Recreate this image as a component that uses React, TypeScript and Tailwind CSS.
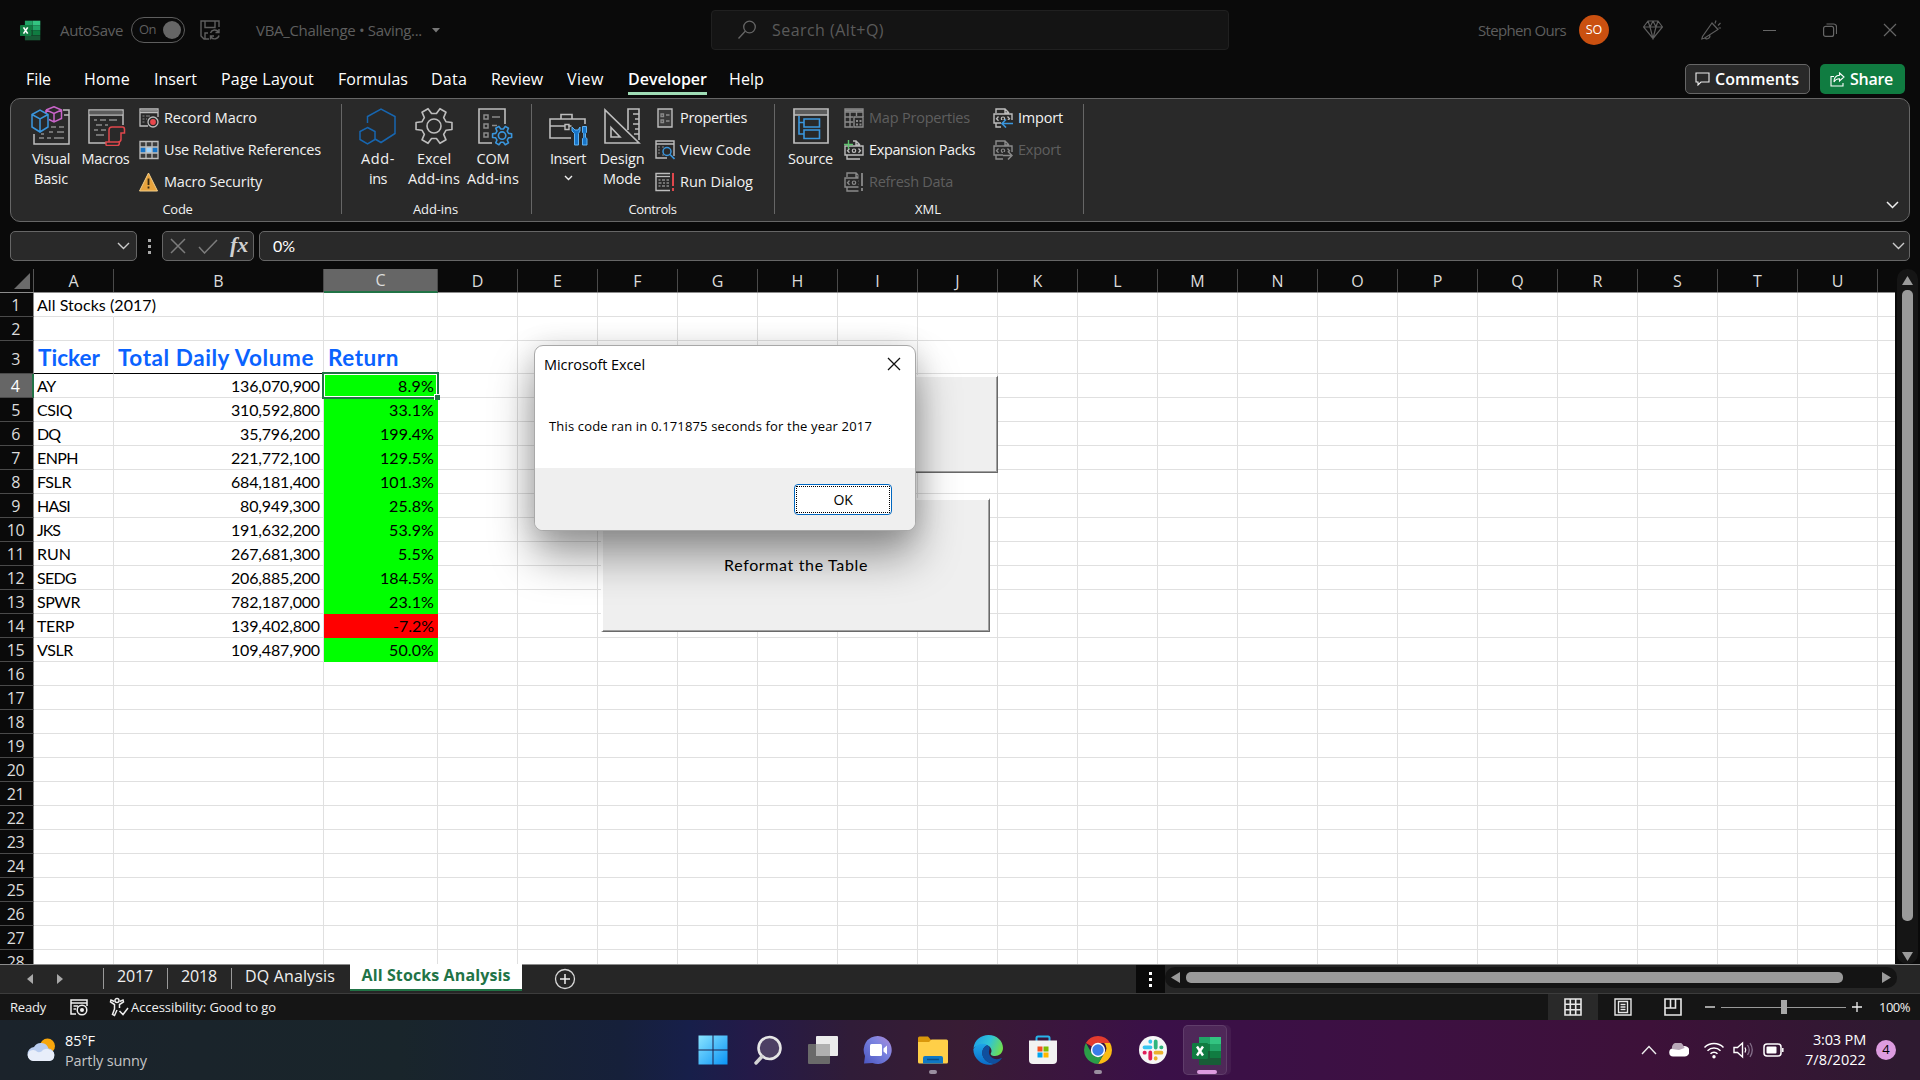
import { useLayoutEffect, useRef, type ReactNode } from 'react';
import clsx from 'clsx';

/** One line of text whose letter spacing is adjusted to fill a given width. */
function Fit({ w, className, children }: { w: number; className?: string; children: string }) {
  const ref = useRef<HTMLSpanElement>(null);
  useLayoutEffect(() => {
    const el = ref.current;
    if (!el) return;
    el.style.letterSpacing = '0px';
    const natural = el.getBoundingClientRect().width;
    el.style.letterSpacing = `${(w - natural) / children.length}px`;
  }, [w, children]);
  return (
    <span ref={ref} className={clsx('inline-block whitespace-nowrap', className)}>
      {children}
    </span>
  );
}

type IconProps = { size?: number; h?: number; box?: string; className?: string; children: ReactNode };
function Svg({ size = 20, h, box, className, children }: IconProps) {
  const hh = h ?? size;
  return (
    <svg width={size} height={hh} viewBox={box ?? `0 0 ${size} ${hh}`} fill="none" className={clsx('shrink-0', className)}>
      {children}
    </svg>
  );
}

const G = '#bdbdbd';
const D = '#8a8a8a';
const B = '#3a96dd';

function ExcelLogo({ size }: { size: number }) {
  return (
    <Svg size={size} box="0 0 30 30">
      <path d="M7 1h11v7H7z" fill="#21a366" />
      <path d="M18 1h11v7H18z" fill="#33c481" />
      <path d="M7 8h11v7H7z" fill="#107c41" />
      <path d="M18 8h11v7H18z" fill="#21a366" />
      <path d="M7 15h11v7H7z" fill="#185c37" />
      <path d="M18 15h11v7H18z" fill="#107c41" />
      <path d="M7 22h22v7H7z" fill="#185c37" />
      <rect x="0" y="7" width="16" height="16" rx="1.3" fill="#107c41" />
      <path d="M5 10.500 11 19.500M11 10.500 5 19.500" stroke="#fff" strokeWidth="2.400" />
    </Svg>
  );
}

/* ---------- large ribbon icons, 40x40 ---------- */
const VisualBasicIcon = () => (
  <Svg size={40}>
    <path d="M32 4h6v34H3V28M33 9h5" stroke={G} strokeWidth="1.500" />
    <path d="M20 21h5M28 21h5M8 32h5M16 32h4M23 32h10M18 26h4M26 26h7M10 28h3" stroke={D} strokeWidth="1.500" />
    <path d="M1 8.500 9 4l8 4.500V21l-8 5-8-5zM1 8.500l8 4.500 8-4.500M9 13v13" stroke={B} strokeWidth="1.500" />
    <path d="M15 4l8-3.300L30.500 4v8.500L23 16l-5-2.500M15 4v3M15 4l8 3.500L30.500 4M23 7.500V16" stroke="#c964c9" strokeWidth="1.500" />
  </Svg>
);
const MacrosIcon = () => (
  <Svg size={40}>
    <path d="M20 37H3V4h34v15M3 9h34" stroke={G} strokeWidth="1.500" />
    <path d="M3.500 6.500h33" stroke="#5c5c5c" strokeWidth="3.500" />
    <path d="M8 14h3M14 14h6M23 14h8M10 19h6M19 19h3M8 24h4M15 24h5M10 29h8" stroke={D} strokeWidth="1.400" />
    <path d="M35 21H26q-3 0-3 3v12h9q3 0 3-3V27h3.500v-3.500q0-2.500-2-2.500H35M23 36h-3v2.500q0 1 1.500 1h10q2 0 2-3.500" stroke="#e0474c" strokeWidth="1.500" />
  </Svg>
);
const AddinsIcon = () => (
  <Svg size={40}>
    <path d="M9.500 17V10.500L23 3l14 7.500v17L23 36.500l-6-3.500" stroke="#1766b0" strokeWidth="1.500" />
    <path d="M9.500 21.500 17 25.500v8l-7.500 4.500-7.500-4.500v-8z" stroke="#1766b0" strokeWidth="1.500" />
  </Svg>
);

/** Outline of a six-toothed gear centred on (20, 20), teeth starting at 0 degrees. */
const gearPath =
  'M' +
  Array.from({ length: 6 }, (_, i) => i * 60)
    .flatMap((a) => [[a - 19, 12.8], [a - 11, 18.300], [a + 11, 18.300], [a + 19, 12.800]])
    .map(([deg, r]) => {
      const t = (deg * Math.PI) / 180;
      return `${(20 + r * Math.cos(t)).toFixed(2)} ${(20 + r * Math.sin(t)).toFixed(2)}`;
    })
    .join('L') +
  'Z';
const GearShape = ({ color, width }: { color: string; width: number }) => (
  <>
    <path d={gearPath} stroke={color} strokeWidth={width} strokeLinejoin="round" />
    <circle cx="20" cy="20" r="7" stroke={color} strokeWidth={width} />
  </>
);
const ExcelAddinsIcon = () => (
  <Svg size={40}>
    <GearShape color={G} width={1.6} />
  </Svg>
);
const ComAddinsIcon = () => (
  <Svg size={40}>
    <path d="M19 37H6V3h26v15" stroke={G} strokeWidth="1.600" />
    <path d="M11 9h4v4h-4zM11 18h4v4h-4zM11 27h4v4h-4z" stroke={D} strokeWidth="1.500" />
    <path d="M19 11h8M19 19.500h5" stroke={D} strokeWidth="1.500" />
    <g transform="translate(18.500 19) scale(.53)">
      <GearShape color={B} width={3} />
    </g>
  </Svg>
);
const ToolboxIcon = () => (
  <Svg size={40}>
    <path d="M23 32H2V13h35v5M13 13V8.500h11V13M2 20h15M20.500 20h3" stroke={G} strokeWidth="1.600" />
    <path d="M17 18.500h4v5h-4z" stroke={G} strokeWidth="1.400" />
    <path d="M24 21v4l2.500 2.500V39h4V27.500L32 25v-4l-2 3h-3z" fill="#1774c8" stroke="#5fb2f2" strokeWidth="1" />
    <path d="M34.500 20.500h4v6l-1 1v4l1.500 1V39h-4.500v-6.500l1.200-1v-4l-1.200-1z" fill="#1774c8" stroke="#5fb2f2" strokeWidth="1" />
  </Svg>
);
const DesignIcon = () => (
  <Svg size={40}>
    <path d="M3 4v33h34zM9 21.500V31h9z" stroke={G} strokeWidth="1.600" />
    <path d="M26 24V3h11v31M37 8h-6M37 13h-4M37 18h-6M37 23h-4M37 28h-5" stroke={G} strokeWidth="1.600" />
  </Svg>
);
const SourceIcon = () => (
  <Svg size={40}>
    <path d="M3 4h34v5H3z" fill="#5c5c5c" />
    <path d="M3 3h34v34H3zM3 9h34" stroke={G} strokeWidth="1.700" />
    <path d="M8 10v18h5M8 16.500h5M13 13h15.500v8H13zM13 24h15.500v8.500H13z" stroke={B} strokeWidth="1.600" />
  </Svg>
);

/* ---------- small ribbon icons, 20x20 ---------- */
const RecordMacroIcon = () => (
  <Svg>
    <path d="M9 18H1V1h18v8M1 4.500h18" stroke={G} strokeWidth="1.300" />
    <path d="M1.500 2.800h17" stroke={D} strokeWidth="2" />
    <path d="M3.500 8h2M7 8h4M3.500 11h2M3.500 14h2M7 11h1" stroke={D} strokeWidth="1.200" />
    <circle cx="14" cy="14" r="5" fill="#292929" stroke={G} strokeWidth="1.300" />
    <circle cx="14" cy="14" r="2.900" fill="#e8474c" />
  </Svg>
);
const RelativeRefIcon = () => (
  <Svg>
    <path d="M1 1.500h18v17H1z" fill="#3c3c3c" />
    <path d="M1 7h18v6H1z" fill="#1774c8" />
    <path d="M7 7h6v6H7z" fill="#9fd3fb" />
    <path d="M1 1.500h18v17H1zM7 1.500v17M13 1.500v17M1 7h18M1 13h18" stroke={G} strokeWidth="1.300" />
  </Svg>
);
const WarningIcon = () => (
  <Svg>
    <path d="M9.500 1 18.500 19H.5z" fill="#e8a33d" stroke="#f3cf8b" />
    <path d="M9.500 6.500v6.500M9.500 14.500v2" stroke="#3b2a10" strokeWidth="1.800" />
  </Svg>
);
const PropertiesIcon = () => (
  <Svg>
    <path d="M3 1h14v18H3z" fill="#3a3a3a" stroke={G} strokeWidth="1.400" />
    <path d="M6 6h2.500v2.500H6zM6 12h2.500v2.500H6zM11 7h3.500M11 13h3.500" stroke={D} strokeWidth="1.300" />
  </Svg>
);
const ViewCodeIcon = () => (
  <Svg>
    <path d="M12 18H1V1h18v15M1 4h18" stroke={G} strokeWidth="1.400" />
    <path d="M3 7h2M7 7h2M3 10h2M3 13h2M7 15h2" stroke={D} strokeWidth="1.200" />
    <circle cx="12" cy="11.500" r="4" stroke={B} strokeWidth="1.500" fill="#292929" />
    <path d="M15 14.500 19.500 19" stroke={B} strokeWidth="1.700" />
  </Svg>
);
const RunDialogIcon = () => (
  <Svg>
    <path d="M15 18.500H1v-17h14" stroke={G} strokeWidth="1.400" />
    <path d="M1 4.500h14" stroke={G} strokeWidth="1.300" />
    <path d="M3.500 8h2M7 8h3M11.500 8H14M3.500 11h3M8 11h2M11.500 11H14M3.500 14h2M7 14h3M11.500 14H14" stroke={D} strokeWidth="1.300" />
    <path d="M18 1v13M18 16v3" stroke="#e0474c" strokeWidth="2" />
  </Svg>
);
const MapPropertiesIcon = () => (
  <Svg>
    <path d="M9 19H1V1h18v8M1 4h18M1 9h8M1 14h8M6 4v15M12.500 4v4" stroke={D} strokeWidth="1.400" />
    <path d="M1 2.500h18" stroke={D} strokeWidth="2" />
    <path d="M10 9h9v10h-9z" stroke={D} strokeWidth="1.400" />
    <path d="M12 12h2v2h-2zM15.500 12h2v2h-2zM12 15.500h2v2h-2zM15.500 15.500h2v2h-2z" fill={D} />
  </Svg>
);
function XmlDoc({ color, children }: { color: string; children?: ReactNode }) {
  return (
    <Svg>
      <path d="M3 5V1h9l4 4M12 1v4h4M1 6h18v9H1zM3 15v4h13" stroke={color} strokeWidth="1.400" />
      <path d="M5.500 8.500 3.500 10.700l2 2.100M14.500 8.500l2 2.200-2 2.100" stroke={color} strokeWidth="1.300" />
      <circle cx="10" cy="10.700" r="1.700" stroke={color} strokeWidth="1.200" />
      {children}
    </Svg>
  );
}

/* ---------- ribbon pieces ---------- */
function BigButton({ icon, lines, width, arrow }: { icon: ReactNode; lines: [string, number][]; width: string; arrow?: boolean }) {
  return (
    <div className={clsx('flex shrink-0 flex-col items-center', width)}>
      {icon}
      <div className="mt-[3px] flex flex-col items-center text-[14.5px] leading-5">
        {lines.map(([t, w]) => (
          <Fit key={t} w={w}>{t}</Fit>
        ))}
      </div>
      {arrow && (
        <Svg size={9} h={6} className="mt-1.5">
          <path d="M1 1l3.500 3.500L8 1" stroke="#eee" strokeWidth="1.400" />
        </Svg>
      )}
    </div>
  );
}
function SmallButton({ icon, text, w, off }: { icon: ReactNode; text: string; w: number; off?: boolean }) {
  return (
    <div className="flex h-8 items-center gap-[5px]">
      {icon}
      <Fit w={w} className={clsx('text-[14.5px] leading-5', off && 'text-[#5f5f5f]')}>{text}</Fit>
    </div>
  );
}
function Group({ width, pad, label, labelW, children, shift }: { width: string; pad: string; label: string; labelW: number; children: ReactNode; shift?: string }) {
  return (
    <div className={clsx('flex shrink-0', width)}>
      <div className="flex grow flex-col">
        <div className={clsx('flex h-[101px]', pad)}>{children}</div>
        <div className={clsx('flex h-5 items-center justify-center text-[13px]', shift)}>
          <Fit w={labelW}>{label}</Fit>
        </div>
      </div>
      <div className="mt-[5px] h-[110px] w-px bg-[#666]" />
    </div>
  );
}

const menu: [string, number, string][] = [
  ['File', 25, 'mr-[33px]'],
  ['Home', 46, 'mr-6'],
  ['Insert', 43, 'mr-6'],
  ['Page Layout', 93, 'mr-6'],
  ['Formulas', 70, 'mr-[23px]'],
  ['Data', 36, 'mr-6'],
  ['Review', 52, 'mr-6'],
  ['View', 37, 'mr-6'],
  ['Developer', 79, 'mr-[22px]'],
  ['Help', 35, ''],
];

function TitleBar() {
  return (
    <div className="flex h-[60px] items-center text-[15px] text-[#5e5e5e]">
      <div className="flex w-[711px] items-center pl-5">
        <ExcelLogo size={21} />
        <Fit w={63} className="ml-[19px]">AutoSave</Fit>
        <div className="ml-2 flex h-[26px] w-[54px] items-center justify-between rounded-full border border-[#5e5e5e] pl-[7px] pr-[3px] text-[13px]">
          <Fit w={17}>On</Fit>
          <div className="h-[18px] w-[18px] rounded-full bg-[#666]" />
        </div>
        <Svg className="ml-[15px]">
          <path d="M9 19H4l-3-3V1h18v6M5 1v6.500h10V1M5 19v-6h3" stroke="#5e5e5e" strokeWidth="1.400" />
          <path d="M10.500 13a4.500 4.500 0 0 1 8-1M19 9v3.500h-3.500M19 15.500a4.500 4.500 0 0 1-8 1.500M10.500 19.500V16H14" stroke="#5e5e5e" strokeWidth="1.400" />
        </Svg>
        <Fit w={166} className="ml-9">VBA_Challenge • Saving...</Fit>
        <Svg size={8} h={5} className="ml-[10px]"><path d="M0 0h8L4 4.500z" fill="#777" /></Svg>
      </div>
      <div className="flex h-[40px] w-[518px] items-center rounded-[4px] border border-[#202020] bg-[#141414] pb-px pl-[25px] text-[16px] text-[#5a5a5a]">
        <Svg>
          <circle cx="12.500" cy="7" r="5.800" stroke="#666" strokeWidth="1.300" />
          <path d="M8.200 11.200 1.500 18.500" stroke="#666" strokeWidth="1.300" />
        </Svg>
        <Fit w={112} className="ml-[15px]">Search (Alt+Q)</Fit>
      </div>
      <div className="flex grow items-center justify-end pr-[23px]">
        <Fit w={88}>Stephen Ours</Fit>
        <div className="ml-[13px] flex h-[30px] w-[30px] items-center justify-center rounded-full bg-[#ca5010] text-[12.500px] text-white">SO</div>
        <Svg className="ml-[34px]">
          <path d="M5 1h10l4.500 6L10 18.500.5 7zM.5 7h19M5 1l2 6 3 11.500L13 7l2-6M10 1 7 7M10 1l3 6" stroke="#5e5e5e" strokeWidth="1.200" />
        </Svg>
        <Svg className="ml-[38px]">
          <path d="M11 3 1.500 16.500.8 19l2.500-.7L17 9.500zM9 15.500c0 4-5 4-5 2M14 3.500l1-3M17 5.500l2.500-2.500M17.500 8H20" stroke="#5e5e5e" strokeWidth="1.200" />
        </Svg>
        <div className="ml-[42px] h-px w-[13px] bg-[#666]" />
        <Svg size={14} className="ml-[47px]">
          <rect x=".6" y="3.400" width="10" height="10" rx="2" stroke="#666" strokeWidth="1.200" />
          <path d="M3.500 1h7q3 0 3 3v7" stroke="#666" strokeWidth="1.200" />
        </Svg>
        <Svg size={14} className="ml-[46px]">
          <path d="M1 1l12 12M13 1 1 13" stroke="#666" strokeWidth="1.200" />
        </Svg>
      </div>
    </div>
  );
}

function MenuBar() {
  return (
    <div className="flex h-[38px] justify-between pl-[26px] pr-[15px] text-[16px] text-white">
      <div className="flex h-[35px]">
        {menu.map(([t, w, m]) => (
          <div key={t} className={clsx('flex items-center', m, t === 'Developer' ? 'border-b-[3px] border-[#9fdcb5] pt-[5px] font-semibold' : 'pt-[2px]')}>
            <Fit w={w}>{t}</Fit>
          </div>
        ))}
      </div>
      <div className="flex gap-[10px] pt-1 font-semibold">
        <div className="flex h-[30px] w-[125px] items-center rounded-[5px] border border-[#666] bg-[#292929] pl-[9px]">
          <Svg size={15} h={14}><path d="M1 1h13v9H6l-3 3v-3H1z" stroke="#eee" strokeWidth="1.100" /></Svg>
          <Fit w={84} className="ml-[5px]">Comments</Fit>
        </div>
        <div className="flex h-[30px] w-[85px] items-center rounded-[5px] bg-[#107c41] pl-[10px]">
          <Svg size={15}><path d="M4 4.500H1V14h12v-3M9.500 1l4.500 4-4.500 4V6.800C6.500 6.800 5 8 4 10c0-4 2-6.500 5.500-6.700z" stroke="#fff" strokeWidth="1.100" /></Svg>
          <Fit w={43} className="ml-[5px]">Share</Fit>
        </div>
      </div>
    </div>
  );
}

function Ribbon() {
  return (
    <div className="mx-[10px] flex h-[124px] rounded-[10px] border border-[#666] bg-[#292929] text-[#f2f2f2]">
      <Group width="w-[331px]" pad="pl-[15px] pt-[3px]" label="Code" labelW={30} shift="pl-[3px]">
        <div className="flex pt-1">
          <BigButton icon={<VisualBasicIcon />} lines={[['Visual', 38], ['Basic', 34]]} width="w-[50px]" />
          <BigButton icon={<MacrosIcon />} lines={[['Macros', 48]]} width="w-[59px]" />
        </div>
        <div className="ml-1">
          <SmallButton icon={<RecordMacroIcon />} text="Record Macro" w={93} />
          <SmallButton icon={<RelativeRefIcon />} text="Use Relative References" w={157} />
          <SmallButton icon={<WarningIcon />} text="Macro Security" w={98} />
        </div>
      </Group>
      <Group width="w-[190px]" pad="pl-2 pt-[7px]" label="Add-ins" labelW={45} shift="pr-[2px]">
        <BigButton icon={<AddinsIcon />} lines={[['Add-', 34], ['ins', 18]]} width="w-[56px]" />
        <BigButton icon={<ExcelAddinsIcon />} lines={[['Excel', 34], ['Add-ins', 52]]} width="w-[56px]" />
        <BigButton icon={<ComAddinsIcon />} lines={[['COM', 33], ['Add-ins', 52]]} width="w-[62px]" />
      </Group>
      <Group width="w-[243px]" pad="pl-[9px] pt-[3px]" label="Controls" labelW={48} shift="pr-[1px]">
        <div className="flex pt-1">
          <BigButton icon={<ToolboxIcon />} lines={[['Insert', 36]]} width="w-[54px]" arrow />
          <BigButton icon={<DesignIcon />} lines={[['Design', 45], ['Mode', 38]]} width="w-[54px]" />
        </div>
        <div className="ml-[6px]">
          <SmallButton icon={<PropertiesIcon />} text="Properties" w={67} />
          <SmallButton icon={<ViewCodeIcon />} text="View Code" w={71} />
          <SmallButton icon={<RunDialogIcon />} text="Run Dialog" w={73} />
        </div>
      </Group>
      <Group width="w-[309px]" pad="pl-2 pt-[3px]" label="XML" labelW={26} shift="pr-[2px]">
        <div className="pt-1">
          <BigButton icon={<SourceIcon />} lines={[['Source', 45]]} width="w-[55px]" />
        </div>
        <div className="ml-[6px] w-[149px]">
          <SmallButton icon={<MapPropertiesIcon />} text="Map Properties" w={101} off />
          <SmallButton icon={<XmlDoc color={G}><path d="M0 0h9v4H0z" fill="#292929" /><path d="M4.500 0v9M0 4.500h9" stroke="#5fc46f" strokeWidth="1.400" /></XmlDoc>} text="Expansion Packs" w={106} />
          <SmallButton icon={<XmlDoc color={D}><path d="M14.500 0H20v20h-5.500z" fill="#292929" /><path d="M18 1v13M18 16v3" stroke={D} strokeWidth="1.800" /></XmlDoc>} text="Refresh Data" w={84} off />
        </div>
        <div>
          <SmallButton icon={<XmlDoc color={G}><path d="M8 12h12v8H8z" fill="#292929" /><path d="M20 15.500H9M13 11.500l-4 4 4 4" stroke={B} strokeWidth="1.600" /></XmlDoc>} text="Import" w={45} />
          <SmallButton icon={<XmlDoc color={D}><path d="M10 12h10v8H10z" fill="#292929" /><path d="M10 15.500h9M15 11.500l4 4-4 4" stroke={D} strokeWidth="1.500" /></XmlDoc>} text="Export" w={43} off />
        </div>
      </Group>
      <div className="flex grow items-end justify-end pb-3 pr-[10px]">
        <Svg size={13} h={8}><path d="M1 1l5.500 5.500L12 1" stroke="#eee" strokeWidth="1.500" /></Svg>
      </div>
    </div>
  );
}

function FormulaBar() {
  return (
    <div className="mx-[10px] mt-[9px] flex h-[30px]">
      <div className="flex w-[127px] items-center justify-end rounded-[5px] border border-[#666] bg-[#292929] pr-[6px]">
        <Svg size={13} h={8}><path d="M1 1l5.500 5.500L12 1" stroke="#ccc" strokeWidth="1.400" /></Svg>
      </div>
      <div className="flex w-[25px] flex-col items-center justify-center gap-[3px]">
        <div className="h-[3px] w-[3px] bg-[#aaa]" />
        <div className="h-[3px] w-[3px] bg-[#aaa]" />
        <div className="h-[3px] w-[3px] bg-[#aaa]" />
      </div>
      <div className="flex w-[92px] items-center rounded-[5px] border border-[#666] bg-[#292929] pl-[7px]">
        <Svg size={16}><path d="M1 1l14 14M15 1 1 15" stroke="#7c7c7c" strokeWidth="1.500" /></Svg>
        <Svg size={20} h={15} className="ml-3"><path d="M1 8l5.500 6L19 1" stroke="#7c7c7c" strokeWidth="1.500" /></Svg>
        <span className="ml-3 mt-[-2px] font-['Liberation_Serif'] text-[22px] font-bold italic leading-none text-[#d0d0d0]">fx</span>
      </div>
      <div className="ml-[5px] flex grow items-center justify-between rounded-[5px] border border-[#666] bg-[#292929] pl-[13px] pr-[4px] font-['Lato'] text-[16px] text-white">
        <Fit w={22}>0%</Fit>
        <Svg size={13} h={8}><path d="M1 1l5.500 5.500L12 1" stroke="#ccc" strokeWidth="1.400" /></Svg>
      </div>
    </div>
  );
}

/* ---------- worksheet ---------- */
const columns: [string, string][] = [
  ['A', 'w-[80px]'],
  ['B', 'w-[210px]'],
  ['C', 'w-[114px]'],
  ...'DEFGHIJKLMNOPQRSTU'.split('').map((c): [string, string] => [c, 'w-[80px]']),
];

const stocks: [string, number, string, string][] = [
  ['AY', 19, '136,070,900', '8.9%'],
  ['CSIQ', 35, '310,592,800', '33.1%'],
  ['DQ', 23, '35,796,200', '199.4%'],
  ['ENPH', 41, '221,772,100', '129.5%'],
  ['FSLR', 34, '684,181,400', '101.3%'],
  ['HASI', 33, '80,949,300', '25.8%'],
  ['JKS', 23, '191,632,200', '53.9%'],
  ['RUN', 34, '267,681,300', '5.5%'],
  ['SEDG', 39, '206,885,200', '184.5%'],
  ['SPWR', 43, '782,187,000', '23.1%'],
  ['TERP', 37, '139,402,800', '-7.2%'],
  ['VSLR', 36, '109,487,900', '50.0%'],
];
const pctWidth: Record<number, number> = { 4: 36, 5: 45, 6: 54 };

function cellContent(row: number, col: string): ReactNode {
  if (row === 1 && col === 'A') return <Fit w={119}>All Stocks (2017)</Fit>;
  if (row === 3) {
    const cls = 'text-[22.5px] font-bold leading-none text-[#0a63ff]';
    if (col === 'A') return <Fit w={62} className={cls}>Ticker</Fit>;
    if (col === 'B') return <Fit w={196} className={cls}>Total Daily Volume</Fit>;
    if (col === 'C') return <Fit w={71} className={cls}>Return</Fit>;
  }
  const s = stocks[row - 4];
  if (!s) return null;
  if (col === 'A') return <Fit w={s[1]}>{s[0]}</Fit>;
  if (col === 'B') return <Fit w={s[2].length === 11 ? 89 : 80}>{s[2]}</Fit>;
  if (col === 'C') return <Fit w={s[3] === '-7.2%' ? 41 : pctWidth[s[3].length]}>{s[3]}</Fit>;
  return null;
}

function Cell({ row, col, width }: { row: number; col: string; width: string }) {
  const data = row >= 4 && row <= 15;
  const filled = data && col === 'C';
  return (
    <div
      className={clsx(
        'flex h-full shrink-0 items-center whitespace-nowrap border-b border-r',
        width,
        row === 3 ? 'pl-1 pt-[3px]' : 'pl-[3px]',
        data && col !== 'A' && 'justify-end pr-[3px]',
        filled && (row === 14 ? 'border-[#f00] bg-[#f00]' : 'border-[#0f0] bg-[#0f0]'),
        !filled && 'border-[#e0e0e0]',
        row === 3 && (col === 'A' || col === 'B' || col === 'C') && 'border-b-black',
        row === 1 && col === 'A' && 'border-r-transparent',
        row === 4 && col === 'C' && 'relative',
      )}
    >
      {cellContent(row, col)}
      {row === 4 && col === 'C' && (
        <div className="absolute -left-[2px] -top-[2px] h-[27px] w-[117px] border-2 border-[#217346]">
          <div className="h-full w-full border border-white" />
          <div className="absolute -bottom-[3px] -right-[3px] h-[6px] w-[6px] border-l border-t border-white bg-[#217346]" />
        </div>
      )}
    </div>
  );
}

function FormButton({ className, children }: { className: string; children?: ReactNode }) {
  return (
    <div className={clsx('absolute flex items-center justify-center border-b border-r border-l-2 border-t-2 border-b-[#696969] border-l-white border-r-[#696969] border-t-white bg-[#efefef] shadow-[inset_-1px_-1px_0_#a0a0a0]', className)}>
      {children}
    </div>
  );
}

function Sheet() {
  return (
    <div className="relative mt-2 flex h-[695px]">
      <div className="h-full w-[1895px] overflow-hidden">
        <div className="flex h-6 border-b border-[#8c8c8c] text-[16px] text-[#dcdcdc]">
          <div className="flex w-[34px] shrink-0 items-end justify-end border-r border-[#555] pb-[3px] pr-[3px]">
            <div className="h-0 w-0 border-b-[16px] border-l-[16px] border-b-[#6b6b6b] border-l-transparent" />
          </div>
          {columns.map(([c, w]) => (
            <div key={c} className={clsx('flex shrink-0 items-center justify-center border-r border-[#4a4a4a]', w, c === 'C' && 'h-6 border-b-2 border-b-[#217346] bg-[#666]')}>
              {c}
            </div>
          ))}
        </div>
        <div className="bg-white font-['Lato'] text-[16px] text-black">
          {Array.from({ length: 28 }, (_, i) => i + 1).map((row) => (
            <div key={row} className={clsx('flex', row === 3 ? 'h-[33px]' : 'h-6')}>
              <div
                className={clsx(
                  "flex w-[34px] shrink-0 items-center justify-center border-b border-r border-b-[#4a4a4a] pr-[2px] font-['Open_Sans'] tracking-[-0.5px]",
                  row === 3 && 'pt-1',
                  row === 4 ? 'border-r-2 border-r-[#217346] bg-[#666] text-white' : 'border-r-[#8c8c8c] bg-[#0a0a0a] text-[#dcdcdc]',
                )}
              >
                {row}
              </div>
              {columns.map(([c, w]) => (
                <Cell key={c} row={row} col={c} width={w} />
              ))}
              <div className="grow border-b border-[#e0e0e0]" />
            </div>
          ))}
        </div>
      </div>
      <div className="flex w-[25px] flex-col items-center bg-[#0a0a0a]">
        <div className="flex h-full w-[21px] flex-col items-center rounded-[10px] bg-[#151515] pt-[7px]">
          <Svg size={11} h={9}><path d="M5.500 0 11 9H0z" fill="#9a9a9a" /></Svg>
          <div className="mt-[5px] h-[631px] w-[11px] rounded-[5px] bg-[#9a9a9a]" />
          <Svg size={11} h={9} className="mt-[31px]"><path d="M5.500 9 11 0H0z" fill="#9a9a9a" /></Svg>
        </div>
      </div>
      <FormButton className="left-[600px] top-[106px] h-[98px] w-[398px]" />
      <FormButton className="left-[601px] top-[229px] h-[134px] w-[389px] pb-[2px] font-['Lato'] text-[16px] text-black">
        <Fit w={144}>Reformat the Table</Fit>
      </FormButton>
      <Dialog />
    </div>
  );
}

function Dialog() {
  return (
    <div className="absolute left-[534px] top-[76px] flex h-[186px] w-[382px] flex-col overflow-hidden rounded-[9px] border border-[#a8a8a8] bg-white text-black shadow-[0_26px_44px_rgba(0,0,0,0.38),0_2px_28px_rgba(0,0,0,0.14)]">
      <div className="flex h-[36px] items-center justify-between pl-[9px] pr-[14px] text-[14.5px]">
        <Fit w={101} className="pt-[2px]">Microsoft Excel</Fit>
        <Svg size={14}><path d="M1 1l12 12M13 1 1 13" stroke="#111" strokeWidth="1.300" /></Svg>
      </div>
      <div className="flex grow items-center pl-[14px] pt-[3px] text-[13px]">
        <Fit w={323}>This code ran in 0.171875 seconds for the year 2017</Fit>
      </div>
      <div className="flex h-[62px] items-start justify-end bg-[#efefef] pr-[23px] pt-[16px]">
        <div className="flex h-[31px] w-[98px] rounded-[4px] border border-[#0067c0] bg-white p-px">
          <div className="flex grow items-center justify-center border border-dotted border-black text-[14px]">
            <Fit w={19}>OK</Fit>
          </div>
        </div>
      </div>
    </div>
  );
}

function SheetTabs() {
  return (
    <div className="flex h-[30px] border-b border-t border-b-[#3c3c3c] border-t-[#8c8c8c] bg-[#262626] text-[16px] text-[#f0f0f0]">
      <div className="flex w-[103px] items-center gap-[24px] pl-[27px]">
        <Svg size={6} h={10}><path d="M6 0v10L0 5z" fill="#a8a8a8" /></Svg>
        <Svg size={6} h={10}><path d="M0 0v10l6-5z" fill="#a8a8a8" /></Svg>
      </div>
      <div className="flex h-[24px] pt-[3px]">
        <div className="flex w-16 items-start border-l border-[#999] pl-[13px] leading-4"><Fit w={36}>2017</Fit></div>
        <div className="flex w-16 items-start border-l border-[#999] pl-[13px] leading-4"><Fit w={36}>2018</Fit></div>
        <div className="flex w-[119px] items-start border-l border-[#999] pl-[13px] leading-4"><Fit w={90}>DQ Analysis</Fit></div>
      </div>
      <div className="-mt-px flex h-[27px] w-[172px] items-center justify-center border-b-2 border-[#217346] bg-white pb-[4px] font-bold text-[#217346]">
        <Fit w={149}>All Stocks Analysis</Fit>
      </div>
      <div className="flex w-[614px] items-center pl-8">
        <Svg size={22}><circle cx="11" cy="11" r="9.500" stroke="#d8d8d8" strokeWidth="1.300" /><path d="M11 6v10M6 11h10" stroke="#eee" strokeWidth="1.500" /></Svg>
      </div>
      <div className="flex w-[29px] flex-col items-center justify-center gap-[3px] bg-[#0a0a0a]">
        <div className="h-[3px] w-[3px] bg-white" />
        <div className="h-[3px] w-[3px] bg-white" />
        <div className="h-[3px] w-[3px] bg-white" />
      </div>
      <div className="mt-[2px] flex h-[21px] w-[732px] items-center rounded-[10px] bg-[#141414] pl-[6px]">
        <Svg size={9} h={11}><path d="M9 0v11L0 5.500z" fill="#9a9a9a" /></Svg>
        <div className="ml-[6px] h-[11px] w-[657px] rounded-[5px] bg-[#9a9a9a]" />
        <Svg size={9} h={11} className="ml-[39px]"><path d="M0 0v11l9-5.500z" fill="#9a9a9a" /></Svg>
      </div>
    </div>
  );
}

function StatusBar() {
  return (
    <div className="flex h-[26px] items-center justify-between bg-[#151515] pl-[10px] pr-[10px] text-[13px] text-[#f0f0f0]">
      <div className="flex items-center">
        <Fit w={36} className="pt-px">Ready</Fit>
        <Svg size={18} className="ml-6">
          <path d="M6 16H1V2h16v6M1 5h16M3.500 8H8M3.500 11H6" stroke="#eee" strokeWidth="1.500" />
          <circle cx="12" cy="12" r="4.800" stroke="#eee" strokeWidth="1.500" />
          <circle cx="12" cy="12" r="2" fill="#eee" />
        </Svg>
        <Svg size={20} className="ml-[21px]">
          <circle cx="8" cy="3.500" r="2" stroke="#eee" strokeWidth="1.400" />
          <path d="M5.500 4.500 2 3 1.500 5 5.500 7.500V12l-2 5.500 2 1L8 13M10.500 4.500 14 3l.5 2-4 2.500V11M10.500 14l3.500 3.500L19 11" stroke="#eee" strokeWidth="1.500" />
        </Svg>
        <Fit w={145} className="ml-[2px] pt-px">Accessibility: Good to go</Fit>
      </div>
      <div className="flex h-full items-center">
        <div className="flex h-full w-[50px] items-center justify-center bg-[#292929]">
          <Svg size={18}><path d="M1 1h16v16H1zM1 6.300h16M1 11.700h16M6.300 1v16M11.700 1v16" stroke="#e8e8e8" strokeWidth="1.600" /></Svg>
        </div>
        <div className="flex w-[50px] items-center justify-center">
          <Svg size={18}><path d="M1 1h16v16H1zM4.500 3.500h9v11h-9zM6.500 6.500h5M6.500 9h5M6.500 11.500h5" stroke="#e8e8e8" strokeWidth="1.400" /></Svg>
        </div>
        <div className="flex w-[50px] items-center justify-center">
          <Svg size={18}><path d="M1 1h16v16H1zM1 10h10.500V1M6.500 1v9" stroke="#e8e8e8" strokeWidth="1.600" /></Svg>
        </div>
        <Svg size={10} className="ml-[7px]"><path d="M0 5h10" stroke="#eee" strokeWidth="1.300" /></Svg>
        <div className="ml-[6px] flex h-[14px] w-[125px] items-center">
          <div className="h-px w-[60px] bg-[#999]" />
          <div className="h-[14px] w-[6px] bg-[#a8a8a8]" />
          <div className="h-px grow bg-[#999]" />
        </div>
        <Svg size={10} className="ml-[6px]"><path d="M0 5h10M5 0v10" stroke="#eee" strokeWidth="1.300" /></Svg>
        <Fit w={31} className="ml-[17px] pt-px">100%</Fit>
      </div>
    </div>
  );
}

/* ---------- taskbar icons, 30x30 ---------- */
const WindowsLogo = () => (
  <Svg size={30}>
    <defs>
      <linearGradient id="win" x1="0" y1="0" x2="1" y2="1"><stop stopColor="#8ae4ff" /><stop offset="1" stopColor="#0a93f5" /></linearGradient>
    </defs>
    <path d="M.5.500h14v14H.5zM15.500.500h14v14h-14zM.5 15.500h14v14H.5zM15.500 15.500h14v14h-14z" fill="url(#win)" />
  </Svg>
);
const SearchLogo = () => (
  <Svg size={30}>
    <circle cx="16.500" cy="13" r="11" fill="#4d4064" stroke="#e6e6e6" strokeWidth="2.600" />
    <path d="M9 21.500 3 28" stroke="#d4d4d4" strokeWidth="3.400" strokeLinecap="round" />
  </Svg>
);
const TaskViewLogo = () => (
  <Svg size={30}>
    <rect x="8" y="1" width="22" height="20" rx="1" fill="#ececec" />
    <rect x="0" y="9" width="22" height="20" rx="1" fill="#6a6a6a" />
    <path d="M8 9h14v12H8z" fill="#b0b0b0" />
  </Svg>
);
const ChatLogo = () => (
  <Svg size={30}>
    <defs>
      <linearGradient id="chat" x1="1" y1="0" x2="0" y2="1"><stop stopColor="#b08ad8" /><stop offset=".4" stopColor="#7b83e0" /><stop offset="1" stopColor="#4a55c0" /></linearGradient>
    </defs>
    <path d="M15 1a14 14 0 1 1-5.500 27L1 28.500 2 21A14 14 0 0 1 15 1z" fill="url(#chat)" />
    <rect x="7" y="9" width="12" height="12" rx="1.500" fill="#fff" />
    <path d="M20.500 13.500 24 10.500v9l-3.500-3z" fill="#fff" />
  </Svg>
);
const FolderLogo = () => (
  <Svg size={30}>
    <path d="M0 3q0-1.500 1.500-1.500H10L13 5v5H0z" fill="#d9970b" />
    <path d="M0 7h11l2.500-2.500h15q1.500 0 1.500 1.500v21q0 1.500-1.500 1.500h-27Q0 28.500 0 27z" fill="#ffcf48" />
    <path d="M5 28.500V23q0-2 2-2h16q2 0 2 2v5.500z" fill="#0f78c4" />
    <path d="M9 24.500h12" stroke="#0a4d86" strokeWidth="1.500" />
  </Svg>
);
const EdgeLogo = () => (
  <Svg size={30}>
    <defs>
      <linearGradient id="edge1" x1="0" y1=".3" x2="1" y2=".6"><stop stopColor="#1fa0e4" /><stop offset=".5" stopColor="#2fc3d8" /><stop offset="1" stopColor="#72e04a" /></linearGradient>
      <linearGradient id="edge2" x1="0" y1="0" x2="0" y2="1"><stop stopColor="#1fa5e8" /><stop offset="1" stopColor="#0a6cc8" /></linearGradient>
    </defs>
    <path d="M.5 13C1.500 5 8 0 15.500 0 24 0 30 6 30 13c0 5-4 8-8 8-3.500 0-5-1.500-4-3 1.500-2.500 0-7-5-8-5-.8-10 1-12.500 3z" fill="url(#edge1)" />
    <path d="M.3 14C3 9 10 7.500 14.500 10c-5 2-6.500 8-4 12.500 2.500 4.500 8 7 13 5.500C14 33 .5 27 .3 14z" fill="url(#edge2)" />
    <path d="M14 10.300c-5 2.500-6 8-3.500 12.500s8.500 7 13.500 5c2-1 4-3 5-5-5 3-12 1-13-4.500-.4-3 1-4 .5-6-.3-1.200-1.500-1.800-2.500-2z" fill="#0f4f9e" />
  </Svg>
);
const StoreLogo = () => (
  <Svg size={30}>
    <path d="M8.500 6V3q0-1.500 1.500-1.500h10q1.500 0 1.500 1.500v3" stroke="#28b4ec" strokeWidth="2" />
    <path d="M1 5.500h28V25q0 4-4 4H5q-4 0-4-4z" fill="#f2f2f2" />
    <path d="M9.500 11.500h5v5h-5z" fill="#f25022" />
    <path d="M15.500 11.500h5v5h-5z" fill="#7fba00" />
    <path d="M9.500 17.500h5v5h-5z" fill="#00a4ef" />
    <path d="M15.500 17.500h5v5h-5z" fill="#ffb900" />
  </Svg>
);
const ChromeLogo = () => (
  <Svg size={30}>
    <path d="M15 1a14 14 0 0 1 12.100 7H15a7 7 0 0 0-6.100 3.500L2.900 8A14 14 0 0 1 15 1z" fill="#e33b2e" />
    <path d="M27.100 8A14 14 0 0 1 15 29l6.100-10.500A7 7 0 0 0 21.100 8z" fill="#fbbc14" />
    <path d="M2.900 8A14 14 0 0 0 15 29l6.100-10.500a7 7 0 0 1-12.200 0z" fill="#2b9d48" />
    <circle cx="15" cy="15" r="7.200" fill="#fff" />
    <circle cx="15" cy="15" r="5.700" fill="#3a7de8" />
  </Svg>
);
const SlackLogo = () => (
  <Svg size={30}>
    <circle cx="15" cy="15" r="14" fill="#f7f7f7" />
    <g strokeLinecap="round" strokeWidth="3.800">
      <path d="M6.500 12.300h6M12.300 6.500v.300" stroke="#36c5f0" />
      <path d="M17.700 6.500v6M23.500 12.300h-.3" stroke="#2eb67d" />
      <path d="M23.500 17.700h-6M17.700 23.500v-.3" stroke="#ecb22e" />
      <path d="M12.300 23.500v-6M6.500 17.700h.300" stroke="#e01e5a" />
    </g>
  </Svg>
);

function Taskbar() {
  const apps: [string, ReactNode, string][] = [
    ['windows', <WindowsLogo />, ''],
    ['search', <SearchLogo />, ''],
    ['taskview', <TaskViewLogo />, ''],
    ['chat', <ChatLogo />, ''],
    ['files', <FolderLogo />, 'w-2 bg-[#9a8fa0]'],
    ['edge', <EdgeLogo />, ''],
    ['store', <StoreLogo />, ''],
    ['chrome', <ChromeLogo />, 'w-2 bg-[#9a8fa0]'],
    ['slack', <SlackLogo />, ''],
  ];
  return (
    <div className="flex h-[60px] bg-[linear-gradient(90deg,#1b232b_0px,#19252b_400px,#16203a_620px,#171f4a_690px,#241a48_750px,#301c38_850px,#381c34_960px,#3b1440_1080px,#3a1048_1160px,#3d1042_1400px,#3d1139_1650px,#2e1a30_1900px)] text-white">
      <div className="flex w-[685px] items-center pl-[27px]">
        <Svg size={30} h={24}>
          <circle cx="20.500" cy="8" r="7.500" fill="#f7a60c" />
          <path d="M8 23a7 7 0 0 1-1-14 8 8 0 0 1 14.500 1.500A6.300 6.300 0 0 1 22 23z" fill="#b9cdf0" />
          <path d="M6.500 23a5.500 5.500 0 1 1 2-10.500q2.500 3 6 1A6 6 0 0 1 23 12a5.600 5.600 0 0 1-.500 11z" fill="#e8eefa" />
        </Svg>
        <div className="ml-2 flex flex-col items-start pt-px text-[14.500px] leading-5">
          <Fit w={30}>85°F</Fit>
          <Fit w={82} className="text-[#c4c4c6]">Partly sunny</Fit>
        </div>
      </div>
      {apps.map(([k, icon, dot]) => (
        <div key={k} className="flex w-[55.100px] shrink-0 flex-col items-center pt-[15px]">
          {icon}
          <div className={clsx('mt-[5px] h-1 rounded-full', dot)} />
        </div>
      ))}
      <div className="my-[5px] ml-[2px] flex h-[50px] w-[44px] flex-col items-center rounded-[5px] border border-white/10 bg-white/10 pl-[5px] pt-[10px] shadow-[4px_0_0_rgba(255,255,255,0.05)]">
        <ExcelLogo size={30} />
        <div className="mt-[4px] h-1 w-5 rounded-full bg-[#dd9ce0]" />
      </div>
      <div className="flex grow items-center justify-end pr-6">
        <Svg size={16} h={10}><path d="M1 9l7-7.500L15 9" stroke="#eee" strokeWidth="1.400" /></Svg>
        <Svg size={20} h={14} className="ml-3">
          <path d="M4.500 13.500a4 4 0 0 1-.5-8A6 6 0 0 1 14.500 3 5 5 0 0 1 16 13.500z" fill="#fff" />
          <path d="M3 6A6 6 0 0 1 14.500 3q1 1 1 2L10 7z" fill="#b9a8b8" />
        </Svg>
        <Svg size={22} h={18} className="ml-[14px]">
          <path d="M1.500 6.500a13.500 13.500 0 0 1 19 0M4.500 9.700a9.300 9.300 0 0 1 13 0M7.500 12.800a5 5 0 0 1 7 0" stroke="#fff" strokeWidth="1.500" />
          <circle cx="11" cy="15.700" r="1.700" fill="#fff" />
        </Svg>
        <Svg size={21} h={18} className="ml-[8px]">
          <path d="M1 6.500h3.500L9.500 2v14l-5-4.500H1z" stroke="#fff" strokeWidth="1.400" />
          <path d="M12 6.500q1.500 2.500 0 5" stroke="#fff" strokeWidth="1.300" />
          <path d="M14.500 4q3.500 5 0 10M17 2q4.500 7 0 14" stroke="#85708a" strokeWidth="1.300" />
        </Svg>
        <Svg size={21} h={16} className="ml-[9px]">
          <rect x="1" y="2" width="17" height="12" rx="3" stroke="#fff" strokeWidth="1.500" />
          <rect x="3.500" y="4.500" width="10" height="7" rx="1" fill="#fff" />
          <path d="M19.800 6v4" stroke="#fff" strokeWidth="1.500" />
        </Svg>
        <div className="ml-5 flex w-[62px] flex-col items-end text-[14.500px] leading-5">
          <Fit w={53}>3:03 PM</Fit>
          <Fit w={61}>7/8/2022</Fit>
        </div>
        <div className="ml-[10px] flex h-5 w-5 items-center justify-center rounded-full bg-[#dd9ce0] text-[13px] text-black">4</div>
      </div>
    </div>
  );
}

export default function App() {
  return (
    <div className="flex h-[1080px] w-[1920px] flex-col overflow-hidden bg-[#0a0a0a] font-['Open_Sans','Noto_Sans',sans-serif]">
      <TitleBar />
      <MenuBar />
      <Ribbon />
      <FormulaBar />
      <Sheet />
      <SheetTabs />
      <StatusBar />
      <Taskbar />
    </div>
  );
}
